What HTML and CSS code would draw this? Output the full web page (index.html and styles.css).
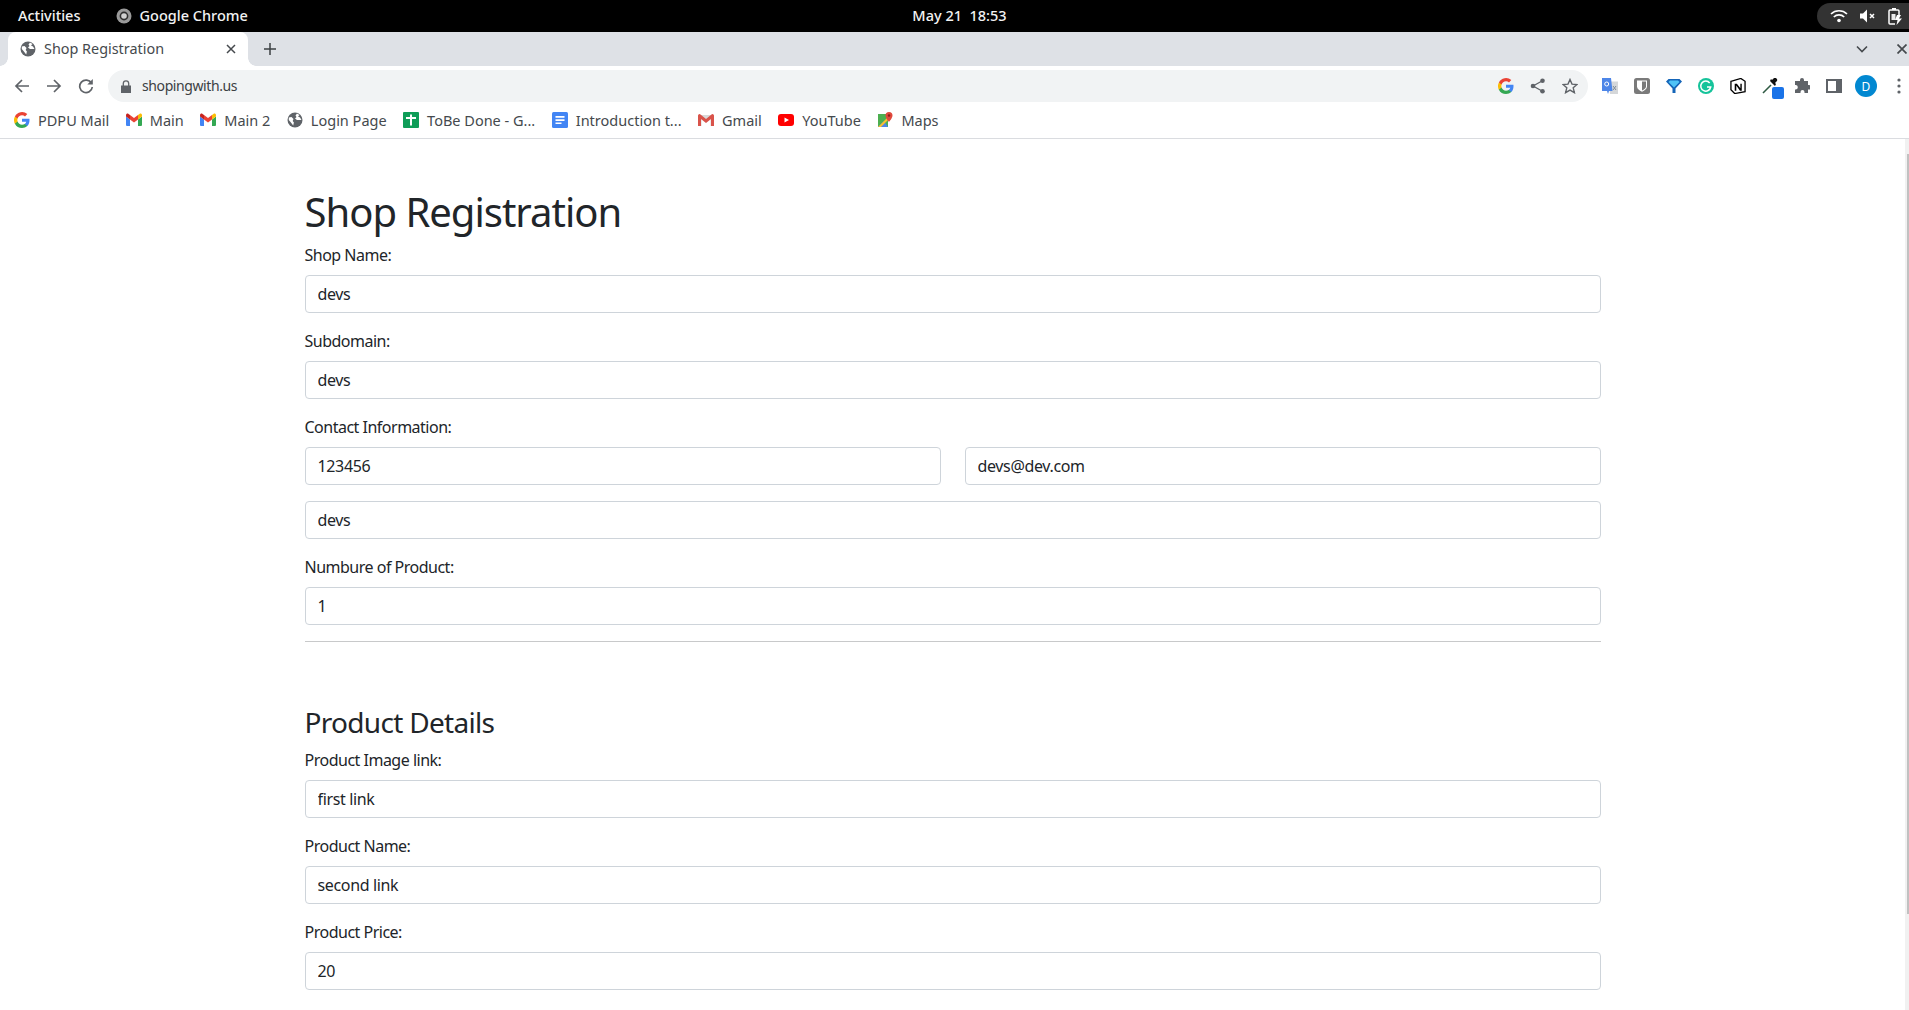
FILE: index.html
```html
<!DOCTYPE html>
<html lang="en">
<head>
<meta charset="utf-8">
<title>Shop Registration</title>
<link rel="stylesheet" href="styles.css">
</head>
<body>
<div class="gnome-bar">
  <div class="gnome-left">
    <span class="gnome-text">Activities</span>
    <span class="gnome-app">
      <svg class="ic16" viewBox="0 0 16 16"><circle cx="8" cy="8" r="7.5" fill="#9a9a9a"/><circle cx="8" cy="8" r="4.4" fill="#2e2e2e"/><circle cx="8" cy="8" r="2.8" fill="#d0d0d0"/></svg>
      <span class="gnome-text">Google Chrome</span>
    </span>
  </div>
  <span class="gnome-clock">May 21&nbsp; 18:53</span>
  <div class="gnome-status">
    <svg class="st-wifi" viewBox="0 0 18 14"><path d="M1 5a11.500 11.500 0 0 1 16 0M3.800 8a7.500 7.500 0 0 1 10.400 0" fill="none" stroke="#fff" stroke-width="1.700"/><circle cx="9" cy="11.500" r="1.800" fill="#fff"/></svg>
    <svg class="st-mute" viewBox="0 0 16 14"><path d="M0 4.500h3l4-4v13l-4-4H0z" fill="#fff"/><path d="M10 5l4 4M14 5l-4 4" stroke="#fff" stroke-width="1.500"/></svg>
    <svg class="st-batt" viewBox="0 0 14 17"><path d="M7 16H2a1 1 0 0 1-1-1V3a1 1 0 0 1 1-1h8a1 1 0 0 1 1 1v4" fill="none" stroke="#fff" stroke-width="1.500"/><path d="M4 0h4v2H4zM9 7h4l-2 3.500h3L8.500 17l1-5H7z" fill="#fff"/><path d="M3.500 6h4v6h-4z" fill="#fff" opacity=".9"/></svg>
  </div>
</div>

<div class="tabstrip">
  <div class="tab">
    <svg class="ic16" viewBox="0 0 16 16"><use href="#globe"/></svg>
    <span class="tab-title">Shop Registration</span>
    <svg class="tab-close" viewBox="0 0 10 10"><path d="M1 1l8 8M9 1l-8 8" stroke="#45494d" stroke-width="1.500"/></svg>
  </div>
  <svg class="new-tab" viewBox="0 0 12 12"><path d="M6 0v12M0 6h12" stroke="#3c4043" stroke-width="1.500"/></svg>
  <div class="strip-right">
    <svg class="chev" viewBox="0 0 12 8"><path d="M1 1.500l5 5 5-5" fill="none" stroke="#45494d" stroke-width="1.600"/></svg>
    <svg class="win-close" viewBox="0 0 10 10"><path d="M.5.5l9 9M9.500.5l-9 9" stroke="#45494d" stroke-width="1.700"/></svg>
  </div>
</div>

<div class="toolbar">
  <div class="nav">
    <svg class="ic16" viewBox="0 0 16 16"><path d="M15 8H2M8 2L2 8l6 6" fill="none" stroke="#5f6368" stroke-width="1.700"/></svg>
    <svg class="ic16" viewBox="0 0 16 16"><path d="M1 8h13M8 2l6 6-6 6" fill="none" stroke="#5f6368" stroke-width="1.700"/></svg>
    <svg class="ic16" viewBox="0 0 16 16"><path d="M13.500 5.200A6.300 6.300 0 1 0 14.300 9" fill="none" stroke="#5f6368" stroke-width="1.700"/><path d="M14.800 1v5.500H9.300z" fill="#5f6368"/></svg>
  </div>
  <div class="omnibox">
    <svg class="lock" viewBox="0 0 10 13"><path d="M0 5.500h10V13H0z" fill="#5f6368"/><path d="M2.300 6V3.500a2.700 2.700 0 0 1 5.400 0V6" fill="none" stroke="#5f6368" stroke-width="1.300"/></svg>
    <span class="url">shopingwith.us</span>
    <div class="omni-actions">
      <svg class="ic16" viewBox="0 0 16 16"><use href="#gicon"/></svg>
      <svg class="ic16" viewBox="0 0 16 16"><circle cx="3" cy="8" r="2.300" fill="#5f6368"/><circle cx="12.500" cy="2.700" r="2.300" fill="#5f6368"/><circle cx="12.500" cy="13.300" r="2.300" fill="#5f6368"/><path d="M12.500 2.700L3 8l9.500 5.300" fill="none" stroke="#5f6368" stroke-width="1.300"/></svg>
      <svg class="ic16" viewBox="0 0 16 16"><path d="M8 1.500l2 4.600 5 .4-3.800 3.300 1.200 4.900L8 12.100l-4.400 2.600 1.200-4.900L1 6.500l5-.4z" fill="none" stroke="#5f6368" stroke-width="1.400"/></svg>
    </div>
  </div>
  <div class="extensions">
    <svg class="ext" viewBox="0 0 16 16"><path d="M7 3.500h9V16H8z" fill="#d5d7d9"/><path d="M0 0h9l1.500 13H7l-1 3-1-3H0z" fill="#4d86e8"/><circle cx="4.700" cy="6" r="2" fill="none" stroke="#fff" stroke-width="1"/><path d="M11 8l3 4M14 8l-3 4" stroke="#7f8a96" stroke-width="1"/></svg>
    <svg class="ext" viewBox="0 0 16 16"><rect width="16" height="16" rx="2.500" fill="#7a7a7a"/><path d="M3 2.500h10v6c0 2.500-2.500 4-5 5.200-2.500-1.200-5-2.700-5-5.200z" fill="#fff"/><path d="M8 3.500h4v5c0 1.800-2 3-4 4z" fill="#7a7a7a"/></svg>
    <svg class="ext" viewBox="0 0 16 16"><path d="M0 3.500L2.500 1h11L16 3.500 9.500 10.500V15h-3v-4.500z" fill="#1565b8"/><path d="M2.500 4L4 2.500h8L13.500 4 8 9.500z" fill="#4fc3f7"/></svg>
    <svg class="ext" viewBox="0 0 16 16"><circle cx="8" cy="8" r="8" fill="#15c39a"/><path d="M11.700 5a5 5 0 1 0 1 4H9" fill="none" stroke="#fff" stroke-width="1.500"/></svg>
    <svg class="ext" viewBox="-.5 -.5 17 17"><path d="M.5 3L11 0l4.500 3v11l-11 2L.5 12z" fill="#fff" stroke="#000" stroke-width="1.400"/><path d="M4.500 5.500h2.300l3.700 5V5.500H12V13h-1.900L6.200 7.500V13H4.500z" fill="#000"/></svg>
    <span class="ext-drop">
      <svg class="ext" viewBox="0 0 16 16"><path d="M1 15l8-8" stroke="#2f5a43" stroke-width="1.600"/><path d="M8 3l5 5 1-2-1-1 1.500-1.500a2 2 0 0 0-3-3L10 2 9 1z" fill="#111"/></svg>
      <span class="ext-badge"></span>
    </span>
    <svg class="ext" viewBox="0 0 16 16"><path d="M6 3V2a2 2 0 0 1 4 0v1h4v4h1a2.300 2.300 0 0 1 0 4.600h-1V15h-3.500v-1a2 2 0 0 0-4 0v1H1v-3.500h1a2.300 2.300 0 0 0 0-4.500H1V3z" fill="#5f6368"/></svg>
    <svg class="ext" viewBox="0 0 16 16"><path d="M0 1h16v14H0z" fill="#5f6368"/><path d="M2 3h8v10H2z" fill="#fff"/></svg>
    <span class="avatar">D</span>
    <svg class="dots" viewBox="0 0 4 16"><circle cx="2" cy="2" r="1.600" fill="#5f6368"/><circle cx="2" cy="8" r="1.600" fill="#5f6368"/><circle cx="2" cy="14" r="1.600" fill="#5f6368"/></svg>
  </div>
</div>

<div class="bookmarks">
  <span class="bm"><svg class="ic16" viewBox="0 0 16 16"><use href="#gicon"/></svg>PDPU Mail</span>
  <span class="bm"><svg class="ic16" viewBox="0 0 16 16"><use href="#gmail"/></svg>Main</span>
  <span class="bm"><svg class="ic16" viewBox="0 0 16 16"><use href="#gmail"/></svg>Main 2</span>
  <span class="bm"><svg class="ic16" viewBox="0 0 16 16"><use href="#globe"/></svg>Login Page</span>
  <span class="bm"><svg class="ic16" viewBox="0 0 16 16"><rect width="16" height="16" rx="1" fill="#0f9d58"/><path d="M7 2.500h2V5h4v2H9v6.500H7V7H3V5h4z" fill="#fff"/></svg>ToBe Done - G...</span>
  <span class="bm"><svg class="ic16" viewBox="0 0 16 16"><rect width="16" height="16" rx="1.500" fill="#4285f4"/><path d="M3.500 4h9v1.700h-9zM3.500 7.200h9v1.700h-9zM3.500 10.400h6v1.700h-6z" fill="#fff"/></svg>Introduction t...</span>
  <span class="bm"><svg class="ic16" viewBox="0 0 16 16"><path d="M1 3h14v11h-2.500V7L8 10.500 3.500 7v7H1z" fill="#d9d9d9"/><path d="M0 3.500A1.500 1.500 0 0 1 2.500 2.500L8 7l5.500-4.500A1.500 1.500 0 0 1 16 3.500V14h-3V7l-5 4-5-4v7H0z" fill="#d9534a"/></svg>Gmail</span>
  <span class="bm"><svg class="ic16" viewBox="0 0 16 16"><rect y="2" width="16" height="12" rx="3" fill="#f00"/><path d="M6.500 5.500L11 8l-4.500 2.500z" fill="#fff"/></svg>YouTube</span>
  <span class="bm"><svg class="ic16" viewBox="0 0 16 16"><path d="M1 2h10v13H1z" fill="#4caf50"/><path d="M1 15l6-6 4 6z" fill="#4d86e8"/><path d="M1 15L11 5v3l-7 7z" fill="#fbc02d"/><path d="M12 0a3.500 3.500 0 0 1 3.500 3.500C15.500 6 12 10 12 10S8.500 6 8.500 3.500A3.500 3.500 0 0 1 12 0z" fill="#e0483c"/><circle cx="12" cy="3.500" r="1.200" fill="#8b1f18"/></svg>Maps</span>
</div>

<div class="viewport">
  <main class="container">
    <h1 class="page-title">Shop Registration</h1>
    <div class="field"><label class="form-label">Shop Name:</label><input class="form-control" type="text" value="devs"></div>
    <div class="field"><label class="form-label">Subdomain:</label><input class="form-control" type="text" value="devs"></div>
    <div class="field">
      <label class="form-label">Contact Information:</label>
      <div class="two-col">
        <input class="form-control" type="text" value="123456">
        <input class="form-control" type="text" value="devs@dev.com">
      </div>
    </div>
    <div class="field"><input class="form-control" type="text" value="devs"></div>
    <div class="field"><label class="form-label">Numbure of Product:</label><input class="form-control" type="text" value="1"></div>
    <hr class="rule">
    <h3 class="section-title">Product Details</h3>
    <div class="field"><label class="form-label">Product Image link:</label><input class="form-control" type="text" value="first link"></div>
    <div class="field"><label class="form-label">Product Name:</label><input class="form-control" type="text" value="second link"></div>
    <div class="field"><label class="form-label">Product Price:</label><input class="form-control" type="text" value="20"></div>
  </main>
  <div class="scrollbar"><div class="thumb"></div></div>
</div>

<svg class="defs" aria-hidden="true">
  <defs>
    <symbol id="globe" viewBox="0 0 16 16"><circle cx="8" cy="8" r="7.500" fill="#5f6368"/><path d="M1.800 5.500l2.700-.5 2 2-.8 2 1.200 1.500-.7 3-2.700-3.500-1.700-2zM10 1.500l2.500 1.500-1.500 1.500 2 1 1.500 2.500h-4.500L8 6.500 9.500 5 8.500 3.500z" fill="#fff"/></symbol>
    <symbol id="gicon" viewBox="0 0 16 16"><path d="M15.500 8.200c0-.6 0-1.100-.1-1.500H8v3h4.300c-.2 1-.8 1.800-1.600 2.300v2h2.600c1.400-1.300 2.200-3.300 2.200-5.800z" fill="#4285f4"/><path d="M8 16c2.100 0 3.900-.7 5.300-2l-2.600-2c-.7.500-1.600.8-2.700.8-2.100 0-3.800-1.400-4.400-3.200H.9v2.100A8 8 0 0 0 8 16z" fill="#34a853"/><path d="M3.600 9.600a4.800 4.800 0 0 1 0-3.100V4.400H.9a8 8 0 0 0 0 7.300z" fill="#fbbc05"/><path d="M8 3.200c1.200 0 2.200.4 3 1.200l2.300-2.300A8 8 0 0 0 .9 4.400l2.700 2.100C4.200 4.600 5.900 3.200 8 3.200z" fill="#ea4335"/></symbol>
    <symbol id="gmail" viewBox="0 0 16 16"><path d="M1 14h3V7.500L0 4.500V13a1 1 0 0 0 1 1z" fill="#4285f4"/><path d="M12 14h3a1 1 0 0 0 1-1V4.500l-4 3z" fill="#34a853"/><path d="M12 3v4.500l4-3V3.200c0-1.300-1.500-2-2.500-1.300z" fill="#fbbc05"/><path d="M4 7.500V3l4 3 4-3v4.500L8 10.500z" fill="#ea4335"/><path d="M0 3.200v1.300l4 3V3L2.500 1.900C1.500 1.200 0 1.900 0 3.200z" fill="#c5221f"/></symbol>
  </defs>
</svg>
</body>
</html>
```

FILE: styles.css
```css
* { box-sizing: border-box; }
html, body { margin: 0; height: 100%; }
body {
  display: flex;
  flex-direction: column;
  height: 100vh;
  overflow: hidden;
  background: #fff;
  color: #212529;
  font-family: "Noto Sans", sans-serif;
}
svg { display: block; flex: none; }
.ic16 { width: 16px; height: 16px; }
.defs { position: absolute; width: 0; height: 0; }

/* GNOME bar */
.gnome-bar {
  flex: none;
  height: 32px;
  background: #000;
  display: grid;
  grid-template-columns: 1fr auto 1fr;
  align-items: center;
  padding-left: 18px;
}
.gnome-left { display: flex; align-items: center; gap: 36px; }
.gnome-app { display: flex; align-items: center; gap: 7px; }
.gnome-text, .gnome-clock { color: #f2f2f2; font-size: 14.500px; font-weight: 500; padding-bottom: 2px; }
.gnome-clock { margin-left: -8px; }
.gnome-status {
  justify-self: end;
  width: 92px;
  height: 26px;
  background: #333;
  border-radius: 13px 0 0 13px;
  display: flex;
  align-items: center;
  padding-left: 13px;
  gap: 12px;
}
.st-wifi { width: 18px; height: 14px; }
.st-mute { width: 16px; height: 14px; }
.st-batt { width: 14px; height: 17px; }

/* Tab strip */
.tabstrip {
  flex: none;
  height: 34px;
  background: #dee1e6;
  display: flex;
  align-items: center;
  padding-left: 8px;
}
.tab {
  position: relative;
  width: 240px;
  height: 34px;
  background: #fff;
  border-radius: 8px 8px 0 0;
  display: flex;
  align-items: center;
  padding: 0 12px;
  gap: 8px;
}
.tab::before, .tab::after {
  content: "";
  position: absolute;
  bottom: 0;
  width: 8px;
  height: 8px;
  background: radial-gradient(circle at var(--cx) 0, #dee1e6 7.5px, #fff 8px);
}
.tab::before { left: -8px; --cx: 0; }
.tab::after { right: -8px; --cx: 100%; }
.tab-title { flex: 1; font-size: 14.400px; color: #45494d; white-space: nowrap; padding-bottom: 2px; }
.tab-close { width: 10px; height: 10px; }
.new-tab { width: 12px; height: 12px; margin-left: 16px; }
.strip-right { margin-left: auto; display: flex; align-items: center; gap: 28.500px; padding-right: 2.500px; }
.chev { width: 12px; height: 8px; }
.win-close { width: 10px; height: 10px; }

/* Toolbar */
.toolbar {
  flex: none;
  height: 38px;
  background: #fff;
  display: flex;
  align-items: flex-start;
  padding-top: 4px;
}
.nav {
  display: flex;
  align-items: center;
  gap: 16px;
  height: 32px;
  width: 108px;
  padding-left: 14px;
}
.omnibox {
  width: 1480px;
  height: 32px;
  background: #f1f3f4;
  border-radius: 16px;
  display: flex;
  align-items: center;
  padding: 0 10px 0 13px;
}
.lock { width: 10px; height: 13px; }
.url { margin-left: 11px; font-size: 14px; letter-spacing: -.4px; color: #3c4043; padding-bottom: 1px; }
.omni-actions { margin-left: auto; display: flex; gap: 16px; }
.extensions {
  display: flex;
  align-items: center;
  height: 32px;
  padding-left: 14px;
  gap: 16px;
}
.ext { width: 16px; height: 16px; }
.ext-drop { position: relative; display: block; }
.ext-badge {
  position: absolute;
  right: -6px;
  bottom: -5px;
  width: 12px;
  height: 12px;
  border-radius: 2px;
  background: #1a73e8;
}
.avatar {
  width: 22px;
  height: 22px;
  border-radius: 50%;
  background: #0288d1;
  color: #fff;
  font-size: 12px;
  display: flex;
  align-items: center;
  justify-content: center;
  margin: 0 -3px;
}
.dots { width: 4px; height: 16px; margin-left: 7px; }

/* Bookmarks */
.bookmarks {
  flex: none;
  height: 35px;
  background: #fff;
  border-bottom: 1px solid #dadce0;
  display: flex;
  align-items: center;
  gap: 16.500px;
  padding: 0 0 3px 14px;
}
.bm { display: flex; align-items: center; gap: 8px; font-size: 14.500px; color: #45494d; white-space: nowrap; }

/* Page */
.viewport { flex: 1; min-height: 0; display: flex; overflow: hidden; }
.container { flex: 1; min-width: 0; padding: 48px 304.500px 0; }
.page-title { margin: 0 0 7px; padding-top: 1px; font-size: 40px; line-height: 48px; font-weight: 400; letter-spacing: -1px; }
.section-title { margin: 64px 0 8.700px; font-size: 28px; line-height: 33.600px; font-weight: 400; letter-spacing: -.7px; }
.field { margin-bottom: 16px; }
.form-label { display: block; margin-bottom: 8px; font-size: 16px; line-height: 24px; letter-spacing: -.5px; }
.form-control {
  display: block;
  width: 100%;
  height: 38px;
  padding: 6px 12px;
  font: inherit;
  font-size: 16px;
  line-height: 24px;
  letter-spacing: -.35px;
  color: #212529;
  background: #fff;
  border: 1px solid #ced4da;
  border-radius: 4px;
}
.two-col { display: grid; grid-template-columns: 1fr 1fr; gap: 24px; }
.rule { margin: 16px 0; border: 0; border-top: 1px solid #c8c9ca; }
.scrollbar { flex: none; width: 4px; background: #f1f1f1; padding: 15px 0 0 2px; }
.thumb { height: 760px; background: #c1c1c1; }
```
